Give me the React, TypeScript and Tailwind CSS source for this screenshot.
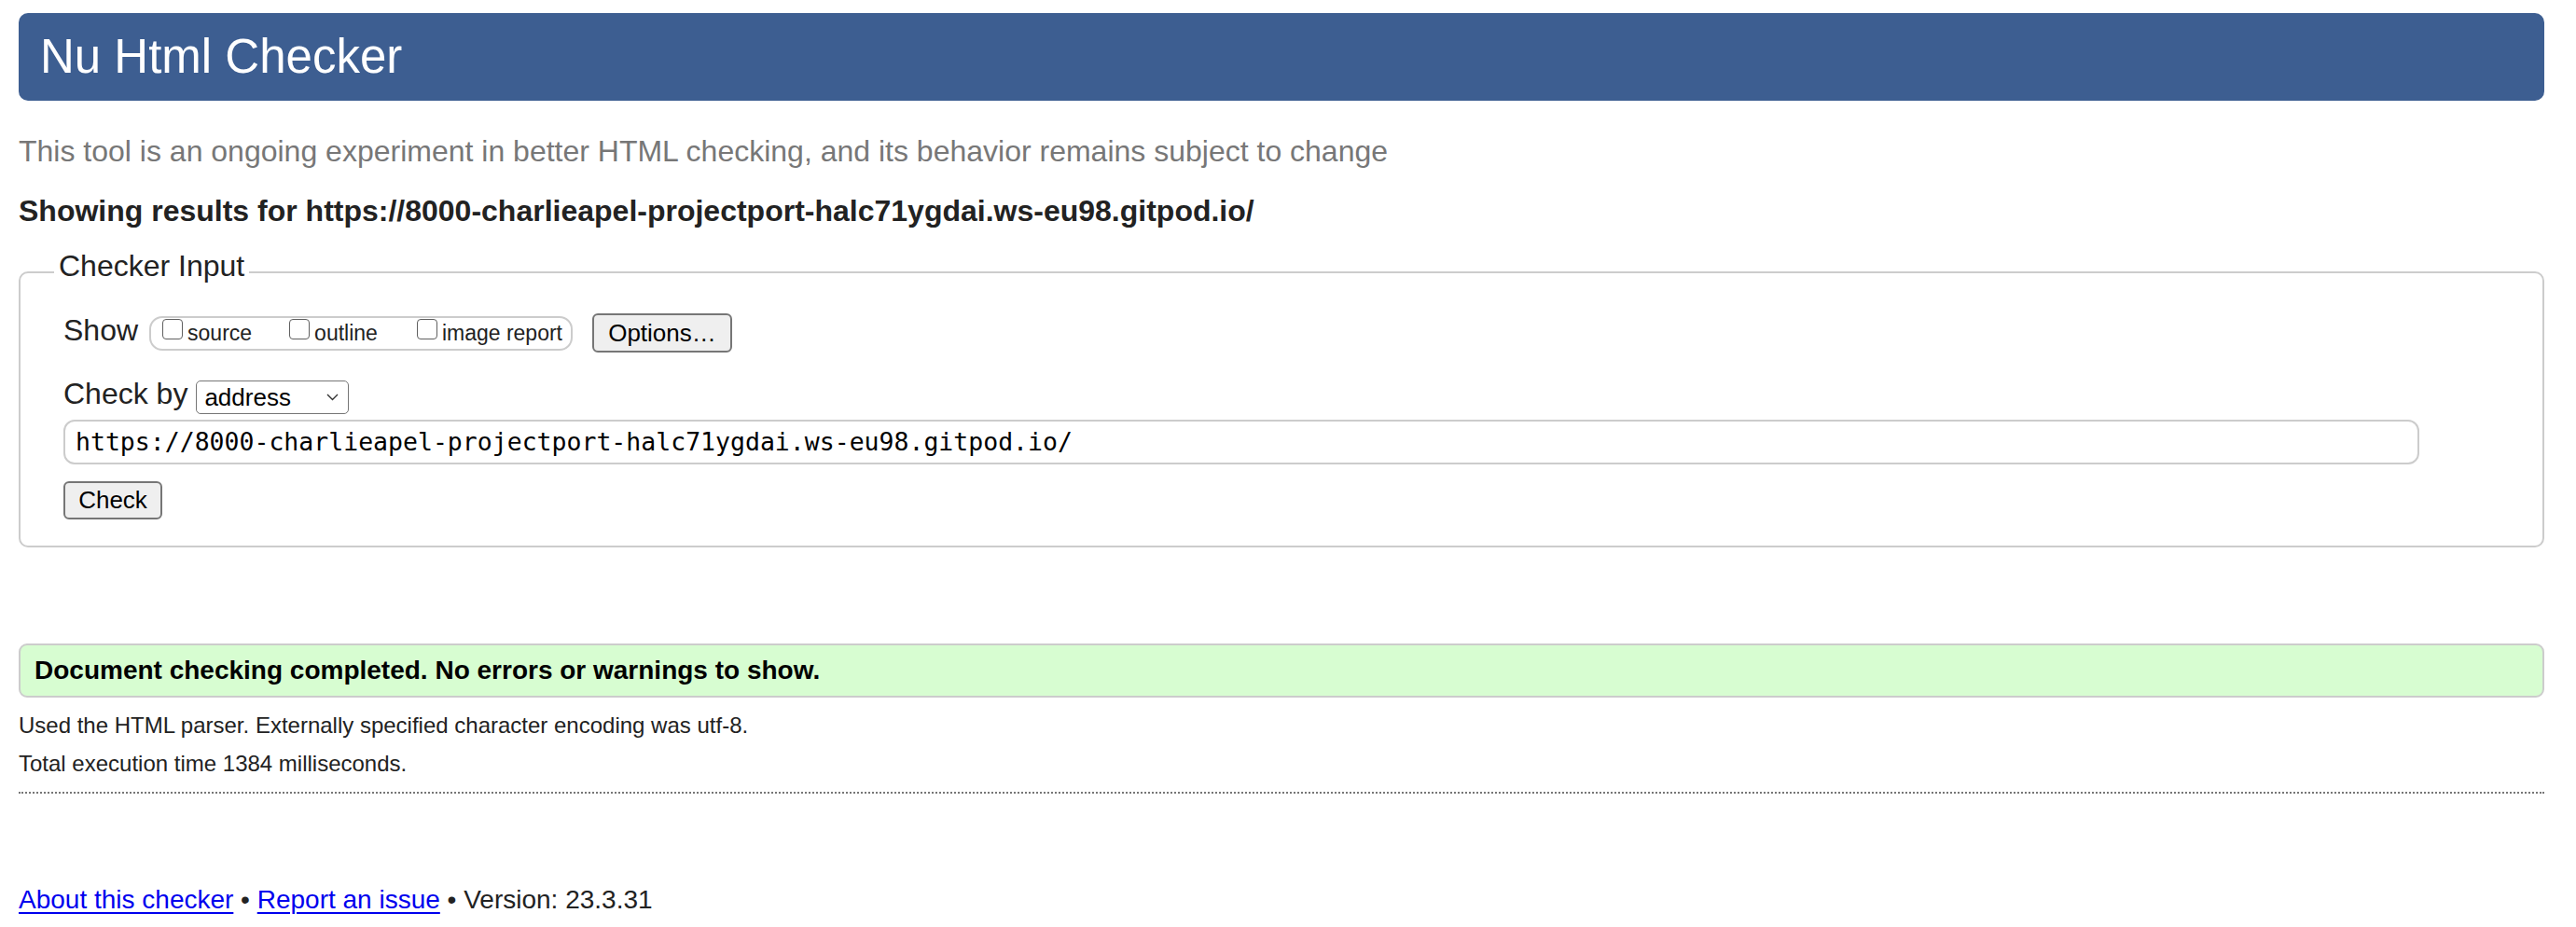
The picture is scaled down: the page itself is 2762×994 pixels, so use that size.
import React from "react";

function Checkbox() {
  return <span className="mt-[1px] block h-[22px] w-[22px] shrink-0 rounded-[4px] border-[1.5px] border-[#606060] bg-white" />;
}

export default function App() {
  const url = "https://8000-charlieapel-projectport-halc71ygdai.ws-eu98.gitpod.io/";
  return (
    <div className="min-h-[994px] bg-white pl-[20px] pr-[34px] pt-[14px] font-['Liberation_Sans',Arial,sans-serif] text-[#222]">
      <div className="h-[94px] rounded-[10px] bg-[#3d5e91] pl-[23px] text-[51px] leading-[94px] text-white">
        Nu Html Checker
      </div>
      <p className="mt-[34px] text-[32px] leading-[40px] text-[#777]">
        This tool is an ongoing experiment in better HTML checking, and its behavior remains subject to change
      </p>
      <p className="mt-[24px] text-[32px] font-bold leading-[40px] text-[#222]">Showing results for {url}</p>

      <fieldset className="mt-[23px] rounded-[10px] border-2 border-[#ccc] pb-[28px] pl-[36px] pt-[21px]">
        <legend className="px-[5px] pb-[14px] text-[32px] leading-[32px] text-[#222]">Checker Input</legend>
        <div className="pl-[10px]">
          <div className="flex h-[42px] items-start">
            <span className="text-[32px] leading-[36px]">Show</span>
            <div className="ml-[12px] mt-[3px] flex h-[37px] items-start rounded-[14px] border-2 border-[#ccc] pl-[12px] pr-[9px]">
              <label className="flex items-start">
                <Checkbox />
                <span className="ml-[5px] text-[23px] leading-[33px]">source</span>
              </label>
              <label className="ml-[40px] flex items-start">
                <Checkbox />
                <span className="ml-[5px] text-[23px] leading-[33px]">outline</span>
              </label>
              <label className="ml-[42px] flex items-start">
                <Checkbox />
                <span className="ml-[5px] text-[23px] leading-[33px]">image report</span>
              </label>
            </div>
            <div className="ml-[21px] flex h-[42px] w-[150px] items-center justify-center rounded-[6px] border-2 border-[#767676] bg-[#efefef] text-[26px] text-black">
              Options…
            </div>
          </div>

          <div className="mt-[30px] flex h-[36px] items-start">
            <span className="text-[32px] leading-[28px]">Check by</span>
            <div className="ml-[9px] flex h-[36px] w-[164px] items-center justify-between rounded-[5px] border-[1.5px] border-[#767676] bg-white pl-[8px] pr-[10px] text-[26px] text-black">
              <span>address</span>
              <svg width="13" height="8" viewBox="0 0 13 8" fill="none">
                <polyline points="1,1 6.5,6.5 12,1" stroke="#333" strokeWidth="1.4" />
              </svg>
            </div>
          </div>

          <div className="mt-[6px] flex h-[48px] w-[2526px] items-center rounded-[12px] border-2 border-[#ccc] bg-white pl-[11px] font-['DejaVu_Sans_Mono',monospace] text-[26.5px] text-black">
            {url}
          </div>

          <div className="mt-[18px] flex h-[41px] w-[106px] items-center justify-center rounded-[6px] border-2 border-[#767676] bg-[#efefef] text-[26px] text-black">
            Check
          </div>
        </div>
      </fieldset>

      <div className="mt-[103px] h-[58px] rounded-[9px] border-2 border-[#ccc] bg-[#d7fdd1] pl-[15px] text-[28px] font-bold leading-[54px] text-black">
        Document checking completed. No errors or warnings to show.
      </div>
      <p className="mt-[15px] text-[24px] leading-[30px]">
        Used the HTML parser. Externally specified character encoding was utf-8.
      </p>
      <p className="mt-[11px] text-[24px] leading-[30px]">Total execution time 1384 milliseconds.</p>
      <div className="mt-[15px] border-t-2 border-dotted border-[#777]" />
      <p className="mt-[97px] text-[28px] leading-[34px] text-[#222]">
        <a href="#" className="text-[#0000ee] underline decoration-[2px] underline-offset-[4px]">
          About this checker
        </a>
        {" • "}
        <a href="#" className="text-[#0000ee] underline decoration-[2px] underline-offset-[4px]">
          Report an issue
        </a>
        {" • Version: 23.3.31"}
      </p>
    </div>
  );
}
